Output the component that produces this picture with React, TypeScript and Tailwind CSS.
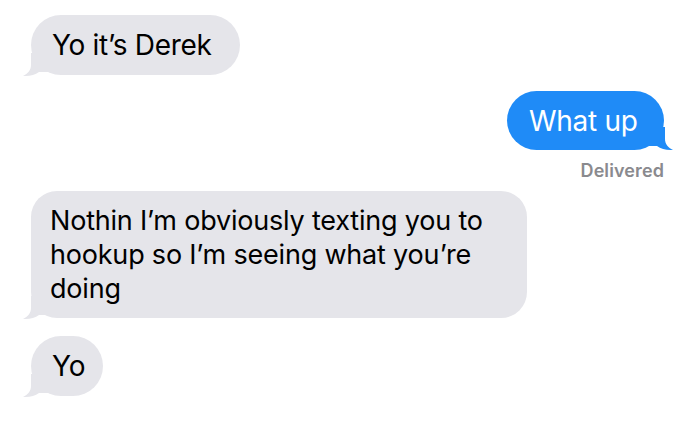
import React from "react";

const GRAY = "#e5e5ea";
const BLUE = "#1f8bf7";

function LeftTail() {
  return (
    <svg className="absolute left-[-8px] bottom-[-2px]" width="26" height="24" viewBox="0 0 26 24">
      <path d="M8 0 L8 12 C8 17 5 20.5 0 23 C6 23.6 12 22 16 19 L26 19 L26 0 Z" fill={GRAY} />
    </svg>
  );
}

function RightTail() {
  return (
    <svg className="absolute right-[-9px] bottom-[-1px]" width="26" height="24" viewBox="0 0 26 24">
      <path d="M18 0 L18 12 C18 17 21 20.5 26 23 C20 23.6 14 22 10 19 L0 19 L0 0 Z" fill={BLUE} />
    </svg>
  );
}

export default function App() {
  return (
    <div
      className="w-[700px] h-[421px] overflow-hidden bg-white pt-[15px] pl-[31px] pr-[36px] flex flex-col"
      style={{ fontFamily: "Inter, 'Liberation Sans', sans-serif" }}
    >
      <div className="flex">
        <div className="relative w-[209px] h-[60px] rounded-[30px] bg-[#e5e5ea] pl-[21px] flex items-center text-[28px] text-black tracking-[-0.3px]">
          <LeftTail />
          <span className="relative">Yo it’s Derek</span>
        </div>
      </div>

      <div className="flex justify-end mt-[16px]">
        <div className="relative w-[157px] h-[59px] rounded-[30px] bg-[#1f8bf7] pl-[22px] flex items-center text-[28px] text-white tracking-[-0.3px]">
          <RightTail />
          <span className="relative">What up</span>
        </div>
      </div>
      <div className="text-right mt-[10px] text-[18px] font-semibold text-[#8a8a8e] leading-[22px] tracking-[0.1px]">Delivered</div>

      <div className="flex mt-[9px]">
        <div className="relative w-[496px] h-[127px] rounded-[26px] bg-[#e5e5ea] pl-[19px] pt-[13px] text-[27px] leading-[34px] text-black tracking-[-0.2px]">
          <LeftTail />
          <div className="relative">
            Nothin I’m obviously texting you to
            <br />
            hookup so I’m seeing what you’re
            <br />
            doing
          </div>
        </div>
      </div>

      <div className="flex mt-[18px]">
        <div className="relative w-[72px] h-[60px] rounded-[30px] bg-[#e5e5ea] pl-[21px] flex items-center text-[28px] text-black">
          <LeftTail />
          <span className="relative">Yo</span>
        </div>
      </div>
    </div>
  );
}
